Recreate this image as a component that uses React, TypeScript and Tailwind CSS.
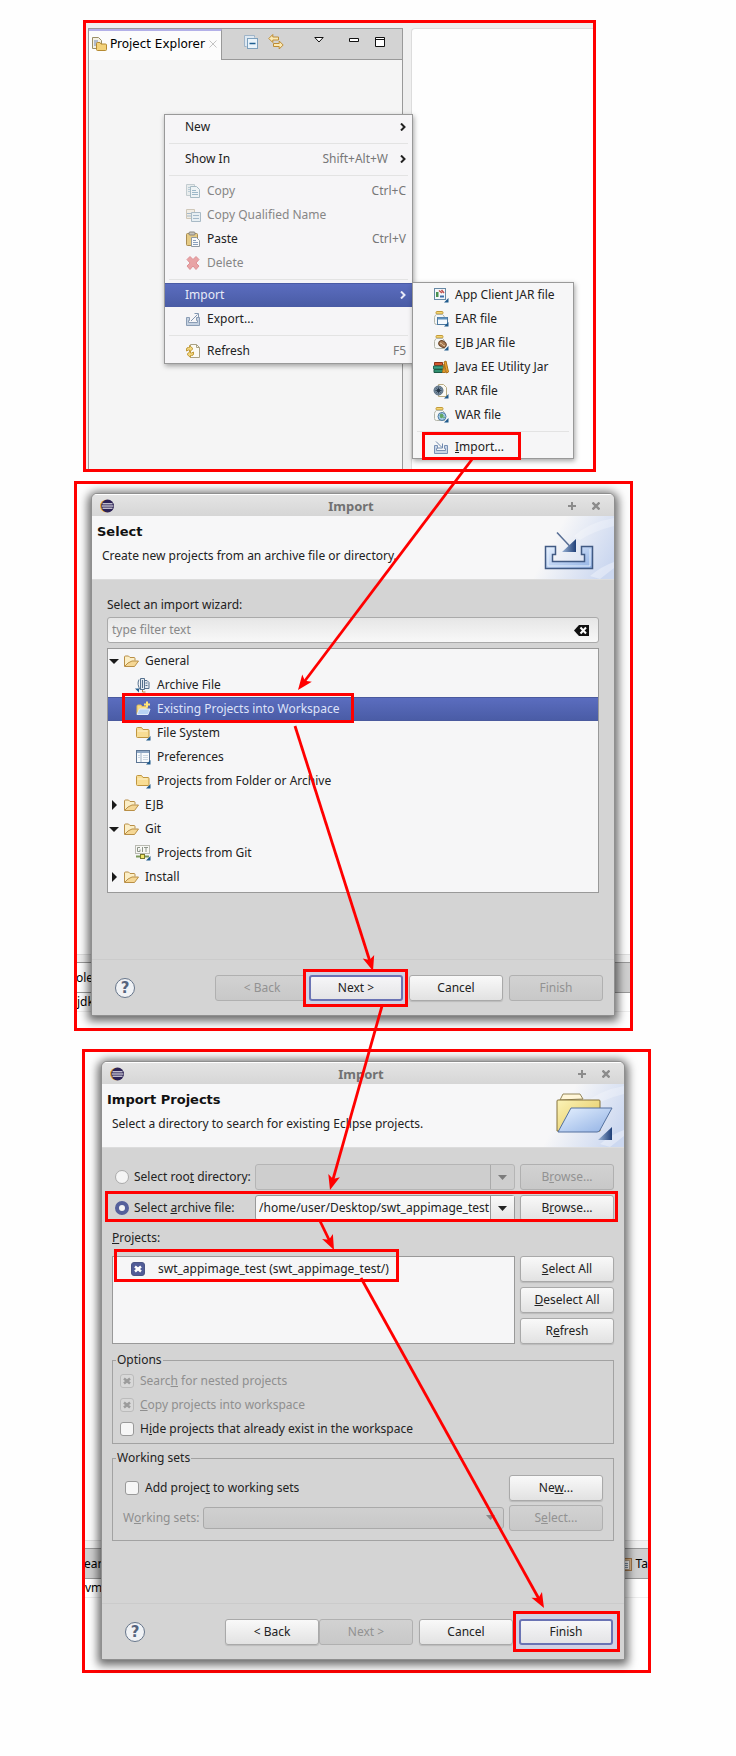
import React, { useState } from "react";
import type { ReactNode } from "react";

/* ---------- small icons ---------- */

type IconProps = { children: ReactNode; size?: string; box?: string };

function Svg({ children, size = "size-4", box = "0 0 16 16" }: IconProps) {
  return (
    <svg viewBox={box} className={`${size} shrink-0`} fill="none" aria-hidden="true">
      {children}
    </svg>
  );
}

const Corner = () => <path d="M15.500 11v4.500h-4.500z" fill="#1f5a8c" />;

const ExplorerIcon = () => (
  <Svg>
    <path d="M1.500 1.500h6l3 3v8h-9z" fill="#f4f1e4" stroke="#9a8f66" />
    <path d="M3 5h4M3 7h5M3 9h3" stroke="#6f86b5" />
    <path d="M5.500 13.500v-6q0-1 1-1h2.500l1 1.500h4.500q1 0 1 1v4.500q0 1-1 1h-8q-1 0-1-1z" fill="#f3d27a" stroke="#b58a32" />
  </Svg>
);

const CollapseIcon = () => (
  <Svg>
    <path d="M3.500 12.500h-2v-11h10v2" fill="#dfe9f2" stroke="#9fb4c8" />
    <rect x="4.500" y="4.500" width="10" height="10" fill="#eaf4fb" stroke="#7da0bd" />
    <path d="M6.500 9.500h6" stroke="#1d5f92" strokeWidth="1.500" />
  </Svg>
);

const LinkIcon = () => (
  <Svg>
    <path d="M0.800 4.500l4-4v2.500h5.700v3h-5.700v2.500z" fill="#fbe9b4" stroke="#bd8c34" strokeLinejoin="round" />
    <path d="M15.200 11l-4-4v2.500h-5.700v3h5.700v2.500z" fill="#fbe9b4" stroke="#bd8c34" strokeLinejoin="round" />
  </Svg>
);

const CopyIcon = () => (
  <Svg>
    <path d="M1.500 1.500h8v11h-8z" fill="#e8eced" stroke="#c3ccd0" />
    <path d="M3 4.500h2M3 6.500h2M3 8.500h2" stroke="#b9cbd6" />
    <path d="M5.500 3.500h6l3 3v8h-9z" fill="#eef3f5" stroke="#a6bac4" />
    <path d="M7 7.500h4M7 9.500h6M7 11.500h6" stroke="#9db8c9" />
  </Svg>
);

const CopyNameIcon = () => (
  <Svg>
    <path d="M1.500 2.500h8v9h-8z" fill="#f1ece4" stroke="#cfc7b8" />
    <path d="M6.500 5.500h9v9h-9z" fill="#e8eff3" stroke="#a9bac6" />
    <path d="M2 6.500h4M2 9h4M8 8.500h6M8 11.500h6" stroke="#a4b9ca" />
  </Svg>
);

const PasteIcon = () => (
  <Svg>
    <rect x="1.500" y="2.500" width="11" height="12" rx="1" fill="#e6cb86" stroke="#a98c53" />
    <rect x="4" y="1" width="6" height="3" rx="1" fill="#c7c2b8" stroke="#8a867c" />
    <path d="M6.500 6.500h5l3 3v6h-8z" fill="#fafafa" stroke="#8f99a3" />
    <path d="M8 9.500h3M8 11.500h5M8 13.500h5" stroke="#8aa0bd" />
  </Svg>
);

const DeleteIcon = () => (
  <Svg>
    <path
      d="M2 4.500l3-3 3 3 3-3 3 3-3 3.500 3 3-3 3.500-3-3.500-3 3.500-3-3.500 3-3z"
      fill="#e8a3a5"
      stroke="#de9196"
      strokeLinejoin="round"
    />
  </Svg>
);

const ExportIcon = () => (
  <Svg>
    <path d="M1.500 6.500h3v3h-1v2h9v-2h-1v-3h3v8h-13z" fill="#c4d0e0" stroke="#8b9db5" />
    <path d="M6 10l6.500-6.500M9.500 2.500h4v4" stroke="#8296b0" />
  </Svg>
);

const TrayIcon = () => (
  <Svg>
    <path d="M1.500 6.500h3v3h-1v2h9v-2h-1v-3h3v8h-13z" fill="#c9d5e6" stroke="#7a91b5" />
    <path d="M3 2.500l6 6M9.500 4.500v4.500h-4.500" stroke="#6f88ad" />
  </Svg>
);

const RefreshIcon = () => (
  <Svg>
    <path d="M5.500 1.500h6l3 3v10h-9z" fill="#fbfaf4" stroke="#a9a184" />
    <path d="M11.500 1.500v3h3" stroke="#a9a184" />
    <path d="M1.500 8v-2q0-1.500 2-1.500h1v-2l3.500 3.200-3.500 3.300v-2h-1z" fill="#f3d77d" stroke="#c19a3c" strokeLinejoin="round" />
    <path d="M8.500 9v2q0 1.500-2 1.500h-1v2l-3.500-3.200 3.500-3.300v2h1z" fill="#f3d77d" stroke="#c19a3c" strokeLinejoin="round" />
  </Svg>
);

const AppClientIcon = () => (
  <Svg>
    <rect x="1.500" y="1.500" width="11" height="11" fill="#f4f7fa" stroke="#6688a4" />
    <path d="M3 5h2.500v5h-2.500z" fill="#4a9150" />
    <path d="M6 3.500l3 2.500M8.500 3l2.500 3" stroke="#c0504b" strokeWidth="1.500" />
    <path d="M7 9.500h4" stroke="#3c6da8" strokeWidth="2" />
    <Corner />
  </Svg>
);

const Jar = () => (
  <>
    <rect x="3" y="0.500" width="7" height="2.500" rx="1" fill="#f4d675" stroke="#c29a3a" />
    <path d="M3.500 3.500h6q2 1.500 2 3v7h-8q-2 0-2-2v-5q0-2 2-3z" fill="#f6f7f5" stroke="#b3b5a9" />
  </>
);

const EarIcon = () => (
  <Svg>
    <Jar />
    <rect x="4.500" y="6.500" width="10" height="7" fill="#f4f9fd" stroke="#4f7ba3" />
    <path d="M5 7.500h9" stroke="#5f91be" strokeWidth="2" />
    <Corner />
  </Svg>
);

const EjbIcon = () => (
  <Svg>
    <Jar />
    <ellipse cx="9.500" cy="9" rx="4" ry="3" transform="rotate(35 9.500 9)" fill="#a77a51" stroke="#67442a" />
    <path d="M7 8q2 .5 2.500 1.500t2.500 1.500" stroke="#e9cfae" />
    <Corner />
  </Svg>
);

const BooksIcon = () => (
  <Svg>
    <path d="M1.500 3.500h8v3h-8z" fill="#d1562e" stroke="#8d3318" />
    <path d="M0.500 7h10v3h-10z" fill="#3d9f82" stroke="#1f6b55" />
    <path d="M1 10.500h9.500v3h-9.500z" fill="#2f8f6f" stroke="#1d5a46" />
    <path d="M11 3l2-1 2.500 11-2 1z" fill="#f0a52c" stroke="#a9701c" />
    <path d="M11 5l-1.500 8.500h3z" fill="#f0a52c" stroke="#a9701c" />
  </Svg>
);

const RarIcon = () => (
  <Svg>
    <path d="M5.500 1.500h5l3 3v9h-8z" fill="#fbfaf4" stroke="#b9ab83" />
    <circle cx="5.500" cy="7.500" r="4.500" fill="#71869a" stroke="#5b6f83" />
    <path d="M2.500 7.500h6M5.500 4.500v6M3.500 5.500l4 4M7.500 5.500l-4 4" stroke="#35485b" />
    <circle cx="5.500" cy="7.500" r="1.500" fill="#26384a" />
    <Corner />
  </Svg>
);

const WarIcon = () => (
  <Svg>
    <Jar />
    <circle cx="9" cy="9.500" r="4" fill="#a6cdea" stroke="#4f7ba3" />
    <path d="M7 8q2-2 3 0t-2 3zM10 11l2-1" fill="#62a562" stroke="#62a562" />
    <Corner />
  </Svg>
);

const FolderOpenIcon = () => (
  <Svg>
    <path d="M1.500 13v-9q0-1 1-1h3l1.500 1.500h4q1 0 1 1v2" fill="#fbeec6" stroke="#b98f46" />
    <path d="M1.500 13.500l3.500-3.500 4-2h6.500l-4 5.500z" fill="#f5d795" stroke="#b98f46" strokeLinejoin="round" />
  </Svg>
);

const FolderIcon = () => (
  <Svg>
    <path d="M1.500 11.500v-8q0-1 1-1h4l1.500 2h5q1 0 1 1v6q0 1-1 1h-10.500q-1 0-1-1z" fill="#f8dd94" stroke="#c0963f" />
    <path d="M2.500 6h10" stroke="#fdf2cf" />
    <Corner />
  </Svg>
);

const ArchiveIcon = () => (
  <Svg>
    <path d="M5.500 1.500h4v11h-4zM9.500 3.500h2.500l2 2v6h-4.500z" fill="#e3eaf1" stroke="#55708d" />
    <path d="M4 2.500q-2.500 5 1.500 10.500M7.500 3v8M10.500 6h2M10.500 8.500h2" stroke="#55708d" />
    <path d="M7.500 13v2h3" stroke="#b08d4c" />
    <path d="M0 11.500h4v4z" fill="#1f5a8c" />
  </Svg>
);

const ExistingIcon = () => (
  <Svg>
    <path d="M2 13v-8q0-1 1-1h3l1 1.500h5v3" fill="#f7dd8a" stroke="#e3bd55" />
    <path d="M2 13.500l2.500-5.500h10.500l-2 5.500z" fill="#b7d3f5" stroke="#dfeafa" />
    <path d="M12 0.500v6M9 3.500h6" stroke="#ffe57a" strokeWidth="2" />
  </Svg>
);

const PreferencesIcon = () => (
  <Svg>
    <rect x="1.500" y="1.500" width="13" height="12" fill="#f7fafc" stroke="#5c7594" />
    <path d="M2 3h12" stroke="#8ea7c4" strokeWidth="2" />
    <path d="M6 4v9" stroke="#9fb0c4" />
    <path d="M3 6.500h2M3 8.500h2M8 6.500h5M8 8.500h5M8 10.500h5" stroke="#ccd7e2" />
    <Corner />
  </Svg>
);

const GitIcon = () => (
  <Svg>
    <rect x="0.500" y="0.500" width="14" height="8" fill="#f7f7f4" stroke="#b9bab2" />
    <path d="M5 2.500h-2.500v4h2.500v-2M7.500 2v5M9 2.500h4M11 2.500v4.500" stroke="#8d958a" />
    <path d="M1 11.500h13" stroke="#7c9a5a" strokeWidth="2" />
    <rect x="5.500" y="9.500" width="4" height="4" fill="#f0e56a" stroke="#7b7a2c" />
    <Corner />
  </Svg>
);

const ClipboardIcon = () => (
  <Svg>
    <rect x="2.500" y="2.500" width="11" height="12" fill="#e2b98a" stroke="#a4794d" />
    <rect x="4.500" y="4.500" width="7" height="9" fill="#fff" stroke="#b9a58d" />
    <path d="M6 7.500h4M6 9.500h4M6 11.500h4" stroke="#8398ad" />
  </Svg>
);

const EclipseLogo = () => (
  <svg viewBox="0 0 14 14" className="size-[14px]" aria-hidden="true">
    <circle cx="6.300" cy="7" r="6.300" fill="#f0a431" />
    <circle cx="7.600" cy="7" r="6.400" fill="#2c2255" />
    <path d="M2.500 4.800h10M1.800 7h11.600M2.500 9.200h10" stroke="#fff" strokeWidth="1" />
  </svg>
);

/* ---------- annotations ---------- */

function Outline({ place }: { place: string }) {
  return <span className={`pointer-events-none absolute z-20 border-[3px] border-[#ff0000] ${place}`} aria-hidden="true" />;
}

const arrows = [
  { from: [473, 458], to: [298, 690] },
  { from: [295, 726], to: [373, 971] },
  { from: [382, 1006], to: [330, 1190] },
  { from: [320, 1221], to: [334, 1250] },
  { from: [361, 1278], to: [544, 1608] },
];

function Arrows() {
  return (
    <svg
      className="pointer-events-none absolute left-0 top-0 z-30 h-[1756px] w-[736px]"
      viewBox="0 0 736 1756"
      aria-hidden="true"
    >
      {arrows.map(({ from, to }) => {
        const dx = to[0] - from[0];
        const dy = to[1] - from[1];
        const len = Math.hypot(dx, dy);
        const angle = (Math.atan2(dy, dx) * 180) / Math.PI;
        return (
          <g key={from.join()} transform={`translate(${from[0]} ${from[1]}) rotate(${angle})`}>
            <path d={`M0 0H${len - 10}`} stroke="#ff0000" strokeWidth="2.800" />
            <path d={`M${len} 0l-15 -6l3.500 6l-3.500 6z`} fill="#ff0000" />
          </g>
        );
      })}
    </svg>
  );
}

/* ---------- menus ---------- */

type Item = {
  label: ReactNode;
  icon?: ReactNode;
  keys?: string;
  more?: boolean;
  disabled?: boolean;
  active?: boolean;
};

const Chevron = () => (
  <Svg size="h-2 w-[6px]" box="0 0 6 8">
    <path d="M1 0.500l3.500 3.500-3.500 3.500" stroke="currentColor" strokeWidth="2" />
  </Svg>
);

function MenuItem({ label, icon, keys, more, disabled, active }: Item) {
  return (
    <button
      type="button"
      role="menuitem"
      disabled={disabled}
      className={`flex h-6 w-full items-center pl-5 pr-[6px] text-left ${
        active
          ? "border-y border-[#4a5ba5] bg-linear-to-b from-[#5b6dbf] to-[#4a5ca6] text-[#e8eaf8]"
          : disabled
            ? "text-[#868686]"
            : "text-[#222]"
      }`}
    >
      {icon && <span className="mr-[6px]">{icon}</span>}
      <span>{label}</span>
      {keys && <span className={`ml-auto text-[#777] ${more ? "mr-3" : ""}`}>{keys}</span>}
      {more && <span className={keys ? "" : "ml-auto"}><Chevron /></span>}
    </button>
  );
}

const Rule = () => (
  <div className="flex h-2 items-center px-1">
    <div className="h-px w-full bg-[#e3e3e3]" />
  </div>
);

function ExplorerPanel() {
  return (
    <section className="relative ml-[83px] flex h-[452px] w-full max-w-[513px] border-[3px] border-[#ff0000] bg-[#efefef] pl-[2px] pt-[5px]">
      <div className="flex w-[315px] shrink-0 flex-col border border-b-0 border-[#999] bg-[#f5f5f5]">
        <header className="flex h-[31px] items-stretch border-b border-[#999] bg-[#d3d3d3]">
          <div className="-mb-px flex w-[133px] items-center border-r border-t-2 border-r-[#999] border-t-[#b3b0e8] bg-[#fcfcfc] pb-1 pl-[2px] font-[DejaVu_Sans,sans-serif]">
            <ExplorerIcon />
            <span className="ml-[3px] whitespace-nowrap text-black">Project Explorer</span>
            <span className="ml-1">
              <Svg size="size-2" box="0 0 8 8"><path d="M0.500 0.500l7 7M7.500 0.500l-7 7" stroke="#c4c4c4" /></Svg>
            </span>
          </div>
          <div className="flex flex-1 items-center pb-1 pl-[21px]">
            <button type="button" aria-label="Collapse All"><CollapseIcon /></button>
            <button type="button" aria-label="Link with Editor" className="ml-[9px]"><LinkIcon /></button>
            <button type="button" aria-label="View Menu" className="mb-1 ml-[30px]">
              <Svg size="h-[6px] w-[10px]" box="0 0 10 6"><path d="M0.800 0.500h8.400l-4.200 4.500z" fill="#fff" stroke="#111" /></Svg>
            </button>
            <button type="button" aria-label="Minimize" className="mb-1 ml-[25px]">
              <Svg size="h-1 w-[10px]" box="0 0 10 4"><path d="M0.500 0.500h9v3h-9z" fill="#fff" stroke="#111" /></Svg>
            </button>
            <button type="button" aria-label="Maximize" className="ml-4">
              <Svg size="size-[10px]" box="0 0 10 10"><path d="M0.500 0.500h9v9h-9zM0.500 2.500h9" fill="#fff" stroke="#111" /></Svg>
            </button>
          </div>
        </header>
      </div>
      <div className="ml-2 flex-1 rounded-tl border-l border-t border-[#dcdcdc] bg-[#fefefe]" />

      <div role="menu" aria-label="Project Explorer" className="absolute left-[78px] top-[91px] z-10 w-[249px] border border-[#999] bg-[#f6f5f7] shadow-[1px_2px_5px_rgba(0,0,0,0.35)]">
        <MenuItem label="New" more />
        <Rule />
        <MenuItem label="Show In" keys="Shift+Alt+W" more />
        <Rule />
        <MenuItem label="Copy" icon={<CopyIcon />} keys="Ctrl+C" disabled />
        <MenuItem label="Copy Qualified Name" icon={<CopyNameIcon />} disabled />
        <MenuItem label="Paste" icon={<PasteIcon />} keys="Ctrl+V" />
        <MenuItem label="Delete" icon={<DeleteIcon />} disabled />
        <Rule />
        <MenuItem label="Import" more active />
        <MenuItem label="Export..." icon={<ExportIcon />} />
        <Rule />
        <MenuItem label="Refresh" icon={<RefreshIcon />} keys="F5" />
      </div>

      <div role="menu" aria-label="Import" className="absolute left-[326px] top-[259px] z-10 w-[162px] border border-[#999] bg-[#f6f6f7] shadow-[1px_2px_5px_rgba(0,0,0,0.35)]">
        <MenuItem label="App Client JAR file" icon={<AppClientIcon />} />
        <MenuItem label="EAR file" icon={<EarIcon />} />
        <MenuItem label="EJB JAR file" icon={<EjbIcon />} />
        <MenuItem label="Java EE Utility Jar" icon={<BooksIcon />} />
        <MenuItem label="RAR file" icon={<RarIcon />} />
        <MenuItem label="WAR file" icon={<WarIcon />} />
        <Rule />
        <div className="relative -mb-px">
          <MenuItem label={<><u>I</u>mport...</>} icon={<TrayIcon />} />
          <Outline place="-bottom-px left-[9px] h-7 w-[99px]" />
        </div>
      </div>
    </section>
  );
}

/* ---------- dialog parts ---------- */

type ButtonProps = { children: ReactNode; disabled?: boolean; focus?: boolean };

function PushButton({ children, disabled, focus }: ButtonProps) {
  return (
    <button
      type="button"
      disabled={disabled}
      className={`h-[26px] w-[94px] shrink-0 rounded-[3px] text-center ${
        disabled
          ? "border border-[#b0b0b0] bg-linear-to-b from-[#d2d2d2] to-[#c8c8c8] text-[#929292]"
          : focus
            ? "border-2 border-[#6a73b4] bg-linear-to-b from-[#f6f6f8] to-[#e4e4e6] text-[#222]"
            : "border border-[#a9a9a9] bg-linear-to-b from-[#f9f9f9] to-[#e2e2e2] text-[#222] shadow-[0_1px_1px_rgba(0,0,0,0.12)]"
      }`}
    >
      {children}
    </button>
  );
}

function Dialog({ title, message, art, children, footer }: { title: string; message: string; art: ReactNode; children: ReactNode; footer: ReactNode }) {
  return (
    <div
      role="dialog"
      aria-label={title}
      className="relative z-10 overflow-hidden rounded-t-[6px] border border-[#8f8f8f] bg-[#d4d4d4] shadow-[0_2px_10px_3px_rgba(0,0,0,0.6)]"
    >
      <div className="flex h-[22px] items-center border-t border-white bg-linear-to-b from-[#e4e4e4] to-[#d6d6d6] pl-2 pr-[14px]">
        <EclipseLogo />
        <div className="flex-1 pl-5 text-center text-[13px] font-bold text-[#717171]">Import</div>
        <button type="button" aria-label="Maximize" className="mr-4">
          <Svg size="size-2" box="0 0 8 8"><path d="M4 0v8M0 4h8" stroke="#8c8c8c" strokeWidth="2" /></Svg>
        </button>
        <button type="button" aria-label="Close">
          <Svg size="size-2" box="0 0 8 8"><path d="M0.500 0.500l7 7M7.500 0.500l-7 7" stroke="#8c8c8c" strokeWidth="2.400" /></Svg>
        </button>
      </div>
      <header className="flex h-16 justify-between border-b border-[#dcdcdc] bg-[#f7f7f8]">
        <div className="pt-[6px]">
          <h2 className="pl-[5px] font-[DejaVu_Sans,sans-serif] text-[13px] font-bold leading-5 text-[#111]">{title}</h2>
          <p className="mt-1 whitespace-nowrap pl-[10px] leading-5">{message}</p>
        </div>
        {art}
      </header>
      {children}
      <footer className="flex items-center border-t border-[#cbcbcb] pb-[14px] pl-[23px] pr-[11px] pt-[15px]">
        <button type="button" aria-label="Help" className="flex size-5 items-center justify-center rounded-full border border-[#66758a] bg-[#f0f2f5] font-[DejaVu_Sans,sans-serif] text-[15px] font-bold leading-none text-[#56647d]">
          ?
        </button>
        <div className="ml-auto flex gap-[6px]">{footer}</div>
      </footer>
    </div>
  );
}

function ArtBackground({ id }: { id: string }) {
  return (
    <>
      <defs>
        <linearGradient id={`${id}-sky`} x1="0" x2="1" y1="0.200" y2="0.600">
          <stop offset="0.300" stopColor="#f7f7f8" />
          <stop offset="1" stopColor="#ccd8f0" />
        </linearGradient>
        <linearGradient id={`${id}-blue`} x1="0" x2="1" y1="0" y2="1">
          <stop offset="0" stopColor="#e6f1ff" />
          <stop offset="1" stopColor="#91b1e4" />
        </linearGradient>
        <linearGradient id={`${id}-gold`} x1="0" x2="1" y1="0" y2="1">
          <stop offset="0" stopColor="#fbf3b8" />
          <stop offset="1" stopColor="#e2c354" />
        </linearGradient>
        <linearGradient id={`${id}-dark`} x1="0" x2="1">
          <stop offset="0" stopColor="#9bb4d6" />
          <stop offset="1" stopColor="#1f3f78" />
        </linearGradient>
      </defs>
      <rect width="84" height="63" fill={`url(#${id}-sky)`} />
      <path d="M44 20q16-14 40-18v8q-20 5-34 14z" fill="#fff" opacity="0.250" />
      <path d="M60 60q12-10 24-14v6l-14 11z" fill="#fff" opacity="0.350" />
    </>
  );
}

const ImportArt = () => (
  <svg viewBox="0 0 84 63" className="h-[63px] w-[84px]" aria-hidden="true">
    <ArtBackground id="tray" />
    <path d="M15.500 30.500h10v8h-3v7h32v-7h-3v-8h11v22h-47z" fill="url(#tray-blue)" stroke="#415a83" strokeWidth="1.500" />
    <path d="M18 33v17h42v-17" fill="none" stroke="#e3eefb" />
    <path d="M27 16.500l14 15" stroke="#566d94" strokeWidth="1.500" />
    <path d="M46 23v13h-14z" fill="url(#tray-dark)" />
  </svg>
);

const FolderArt = () => (
  <svg viewBox="0 0 84 63" className="h-[63px] w-[84px]" aria-hidden="true">
    <ArtBackground id="folder" />
    <path d="M20 16l3-6h17l3 5z" fill="#fff6d8" stroke="#94865a" />
    <path d="M17 47v-30q0-1 1-1h41q1 0 1 1v30z" fill="url(#folder-gold)" stroke="#85733c" />
    <path d="M18 48l13-24h41l-12 22q-1 2-3 2z" fill="url(#folder-blue)" stroke="#54719f" strokeLinejoin="round" />
    <path d="M72 43v13h-14z" fill="url(#folder-dark)" />
  </svg>
);

/* Slice of the workbench that shows behind a dialog. */
function Workbench({ left, leftBelow, right, below, whiteTab }: { left: string; leftBelow: string; right?: ReactNode; below: string; whiteTab?: boolean }) {
  return (
    <div className="absolute inset-0 flex flex-col justify-end overflow-hidden bg-[#fdfdfd] text-black" aria-hidden="true">
      <div className="h-2 border-t border-[#ddd] bg-[#f0f0f0]" />
      <div className="flex h-[31px] items-center justify-between border-y border-[#999] bg-[#cfcfcf]">
        <span className={`flex h-full items-center ${whiteTab ? "w-10 bg-white" : ""}`}>
          <span className="-ml-px">{left}</span>
        </span>
        {right}
      </div>
      <div className={`bg-white ${below}`}>
        <div className="h-[19px] border-b border-[#eee] leading-[18px]">{leftBelow}</div>
      </div>
    </div>
  );
}

/* ---------- wizard selection ---------- */

type Node = { label: string; icon: ReactNode; child?: boolean; open?: boolean; selected?: boolean };

const nodes: Node[] = [
  { label: "General", icon: <FolderOpenIcon />, open: true },
  { label: "Archive File", icon: <ArchiveIcon />, child: true },
  { label: "Existing Projects into Workspace", icon: <ExistingIcon />, child: true, selected: true },
  { label: "File System", icon: <FolderIcon />, child: true },
  { label: "Preferences", icon: <PreferencesIcon />, child: true },
  { label: "Projects from Folder or Archive", icon: <FolderIcon />, child: true },
  { label: "EJB", icon: <FolderOpenIcon /> },
  { label: "Git", icon: <FolderOpenIcon />, open: true },
  { label: "Projects from Git", icon: <GitIcon />, child: true },
  { label: "Install", icon: <FolderOpenIcon /> },
];

function TreeRow({ label, icon, child, open, selected }: Node) {
  return (
    <li
      role="treeitem"
      aria-selected={!!selected}
      aria-expanded={child ? undefined : !!open}
      className={`relative flex h-6 items-center ${child ? "pl-[27px]" : "pl-[1px]"} ${
        selected ? "border-y border-[#4a5a9e] bg-linear-to-b from-[#5b6dbf] to-[#4a5ca6] text-[#dfe3fa]" : ""
      }`}
    >
      {!child && (
        <span className="mr-[4px] flex w-[10px] justify-center">
          <Svg size="size-[10px]" box="0 0 10 10">
            <path d={open ? "M0 3h10l-5 5z" : "M3 0l5 5-5 5z"} fill="#1a1a1a" />
          </Svg>
        </span>
      )}
      {icon}
      <span className="ml-[6px]">{label}</span>
      {selected && <Outline place="-top-[5px] left-[14px] h-[30px] w-[232px]" />}
    </li>
  );
}

function SelectPanel() {
  const [filter, setFilter] = useState("");
  return (
    <section className="relative ml-[74px] mt-[9px] w-full max-w-[559px] border-[3px] border-[#ff0000] pb-3 pl-[14px] pr-[15px] pt-[9px]">
      <Workbench left="ole" leftBelow="jdk" below="h-[35px]" whiteTab />
      <Dialog
        title="Select"
        message="Create new projects from an archive file or directory."
        art={<ImportArt />}
        footer={
          <>
            <div className="flex">
              <PushButton disabled>&lt; Back</PushButton>
              <div className="relative">
                <span className="absolute -inset-x-1 -inset-y-[3px] bg-[#d0d2e4]" aria-hidden="true" />
                <span className="relative flex"><PushButton focus>Next &gt;</PushButton></span>
                <Outline place="-left-[6px] -top-[6px] h-[38px] w-[105px]" />
              </div>
            </div>
            <PushButton>Cancel</PushButton>
            <PushButton disabled>Finish</PushButton>
          </>
        }
      >
        <div className="pb-[66px] pl-[15px] pr-[15px] pt-[15px]">
          <label htmlFor="filter" className="block leading-5">Select an import wizard:</label>
          <div className="mt-[2px] flex h-[26px] items-center rounded-[3px] border border-[#aaa] bg-linear-to-b from-[#e6e6e6] to-[#f8f8f8] pl-1 pr-[9px]">
            <input
              id="filter"
              value={filter}
              onChange={(e) => setFilter(e.target.value)}
              placeholder="type filter text"
              className="min-w-0 flex-1 bg-transparent outline-none placeholder:text-[#888]"
            />
            <button type="button" aria-label="Clear" onClick={() => setFilter("")}>
              <Svg size="h-[11px] w-[15px]" box="0 0 15 11">
                <path d="M0 5.500l5-5.500h10v11h-10z" fill="#111" />
                <path d="M6.500 2.500l5.500 6M12 2.500l-5.500 6" stroke="#fff" strokeWidth="2" />
              </Svg>
            </button>
          </div>
          <ul role="tree" className="mt-[5px] border border-[#999] bg-[#f6f6f7] pb-[3px]">
            {nodes.map((n) => <TreeRow key={n.label} {...n} />)}
          </ul>
        </div>
      </Dialog>
    </section>
  );
}

/* ---------- import projects ---------- */

function Tick({ label, checked, disabled, className = "" }: { label: ReactNode; checked?: boolean; disabled?: boolean; className?: string }) {
  return (
    <label className={`flex items-center ${disabled ? "text-[#8f8f8f]" : ""} ${className}`}>
      <span className="relative flex size-[14px] shrink-0">
        <input
          type="checkbox"
          defaultChecked={checked}
          disabled={disabled}
          className="peer size-[14px] appearance-none rounded-[3px] border border-[#999] bg-[#f6f6f6] enabled:checked:border-[#4b5585] enabled:checked:bg-[#515c97] disabled:border-[#bbb] disabled:bg-[#d8d8d8]"
        />
        <svg
          viewBox="0 0 14 14"
          className={`pointer-events-none absolute inset-0 hidden size-[14px] peer-checked:block ${disabled ? "text-[#9c9c9c]" : "text-white"}`}
          aria-hidden="true"
        >
          <path d="M4 4.500l6 5M10 4.500l-6 5" stroke="currentColor" strokeWidth="2.500" />
        </svg>
      </span>
      <span className="ml-[6px] whitespace-nowrap">{label}</span>
    </label>
  );
}

function RadioDot({ id, checked }: { id: string; checked?: boolean }) {
  return (
    <input
      id={id}
      type="radio"
      name="source"
      defaultChecked={checked}
      className="mr-[5px] size-[14px] shrink-0 appearance-none rounded-full border border-[#aaa] bg-[#f5f5f5] checked:border-[4px] checked:border-[#55609b]"
    />
  );
}

const DownArrow = () => (
  <Svg size="h-[5px] w-[9px]" box="0 0 9 5"><path d="M0 0h9l-4.500 5z" fill="currentColor" /></Svg>
);

function Combo({ value, label, disabled }: { value: string; label: string; disabled?: boolean }) {
  return (
    <div className={`flex h-[26px] min-w-0 flex-1 rounded-[3px] border ${disabled ? "border-[#b5b5b5] bg-[#cecece] text-[#7c7c7c]" : "border-[#999] bg-[#f7f7f7] text-[#222]"}`}>
      <input aria-label={label} defaultValue={value} disabled={disabled} className="min-w-0 flex-1 bg-transparent pl-[3px] outline-none" />
      <button
        type="button"
        aria-label={`${label} history`}
        disabled={disabled}
        className={`flex w-6 items-center justify-center border-l ${disabled ? "border-[#aaa]" : "border-[#999] bg-linear-to-b from-[#fafafa] to-[#e4e4e4]"}`}
      >
        <DownArrow />
      </button>
    </div>
  );
}

function ProjectsPanel() {
  return (
    <section className="relative ml-[82px] mt-[18px] w-full max-w-[569px] border-[3px] border-[#ff0000] pb-[10px] pl-4 pr-[23px] pt-[9px]">
      <Workbench
        left="ear"
        leftBelow="vm"
        below="h-[91px]"
        right={<span className="flex items-center gap-[2px] whitespace-nowrap"><ClipboardIcon />Ta</span>}
      />
      <Dialog
        title="Import Projects"
        message="Select a directory to search for existing Eclipse projects."
        art={<FolderArt />}
        footer={
          <>
            <div className="flex">
              <PushButton>&lt; Back</PushButton>
              <PushButton disabled>Next &gt;</PushButton>
            </div>
            <PushButton>Cancel</PushButton>
            <div className="relative">
              <span className="absolute -inset-x-1 -inset-y-[5px] bg-[#d0d2e4]" aria-hidden="true" />
              <span className="relative flex"><PushButton focus>Finish</PushButton></span>
              <Outline place="-left-[6px] -top-2 h-[41px] w-[107px]" />
            </div>
          </>
        }
      >
        <div className="pb-[62px] pl-[10px] pr-[10px] pt-4">
          <div className="flex items-center pl-[3px]">
            <RadioDot id="root" />
            <label htmlFor="root" className="w-[121px] whitespace-nowrap">Select roo<u>t</u> directory:</label>
            <Combo value="" label="Root directory" disabled />
            <span className="ml-[5px] flex"><PushButton disabled>B<u>r</u>owse...</PushButton></span>
          </div>
          <div className="relative mt-[5px] flex items-center pl-[3px]">
            <RadioDot id="archive" checked />
            <label htmlFor="archive" className="w-[121px] whitespace-nowrap">Select <u>a</u>rchive file:</label>
            <Combo value="/home/user/Desktop/swt_appimage_test" label="Archive file" />
            <span className="ml-[5px] flex"><PushButton>B<u>r</u>owse...</PushButton></span>
            <Outline place="-bottom-px -left-[7px] -right-1 h-[31px]" />
          </div>

          <div className="mt-[7px] leading-5"><u>P</u>rojects:</div>
          <div className="mt-2 flex gap-[5px]">
            <div className="relative flex-1 border border-[#999] bg-[#f6f6f7]">
              <div className="flex h-6 items-center pl-[18px]">
                <Tick checked label={<span className="pl-[7px]">swt_appimage_test (swt_appimage_test/)</span>} />
              </div>
              <Outline place="-top-2 left-[1px] h-[33px] w-[285px]" />
            </div>
            <div className="flex flex-col gap-[5px]">
              <PushButton><u>S</u>elect All</PushButton>
              <PushButton><u>D</u>eselect All</PushButton>
              <PushButton>R<u>e</u>fresh</PushButton>
            </div>
          </div>

          <fieldset className="mt-[7px] border border-[#a2a2a2] pb-[2px] pl-[7px]">
            <legend className="-ml-1 px-px leading-[18px]">Options</legend>
            <Tick className="h-6" label={<>Searc<u>h</u> for nested projects</>} checked disabled />
            <Tick className="h-6" label={<><u>C</u>opy projects into workspace</>} checked disabled />
            <Tick className="h-6" label={<>H<u>i</u>de projects that already exist in the workspace</>} />
          </fieldset>

          <fieldset className="mt-[5px] border border-[#a2a2a2] pb-[9px] pl-[10px] pr-[10px]">
            <legend className="-ml-[7px] px-px leading-[18px]">Working sets</legend>
            <div className="flex items-center justify-between pl-[2px] pt-2">
              <Tick label={<>Add projec<u>t</u> to working sets</>} />
              <PushButton>Ne<u>w</u>...</PushButton>
            </div>
            <div className="mt-1 flex items-center">
              <label htmlFor="sets" className="w-20 whitespace-nowrap text-[#8f8f8f]">W<u>o</u>rking sets:</label>
              <div className="relative mr-[5px] flex flex-1">
                <select id="sets" disabled className="h-[22px] w-full appearance-none rounded-[3px] border border-[#aaa] bg-linear-to-b from-[#d0d0d0] to-[#c8c8c8]">
                  <option></option>
                </select>
                <span className="pointer-events-none absolute right-[9px] top-2 text-[#888]"><DownArrow /></span>
              </div>
              <PushButton disabled>S<u>e</u>lect...</PushButton>
            </div>
          </fieldset>
        </div>
      </Dialog>
    </section>
  );
}

export default function App() {
  return (
    <main className="relative min-h-screen overflow-x-hidden bg-[#fefefe] pb-[83px] pt-5 font-['Noto_Sans',sans-serif] text-[12px] leading-4 text-[#222]">
      <ExplorerPanel />
      <SelectPanel />
      <ProjectsPanel />
      <Arrows />
    </main>
  );
}
